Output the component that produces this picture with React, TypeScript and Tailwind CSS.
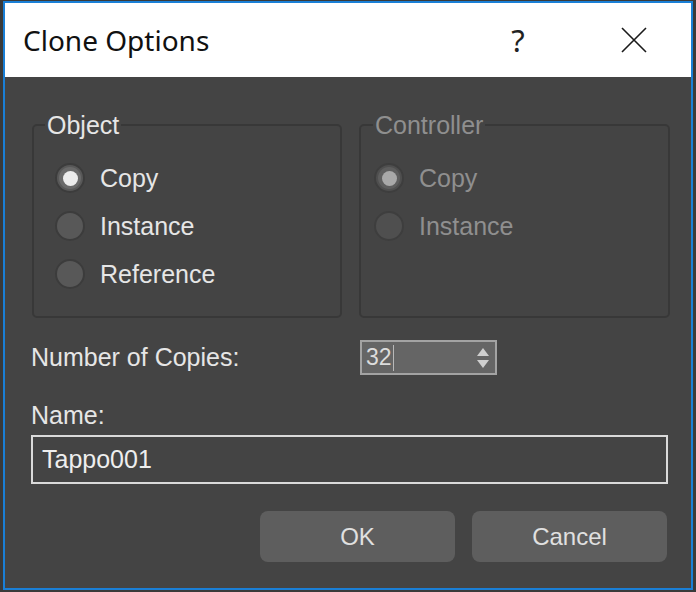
import React from "react";

const body = { fontFamily: '"Liberation Sans", Arial, sans-serif' };

function Radio({ label, checked, disabled }: { label: string; checked?: boolean; disabled?: boolean }) {
  return (
    <div className="flex items-center h-[48px]">
      <div
        className={
          "w-[30px] h-[30px] rounded-full flex items-center justify-center border-2 " +
          (disabled ? "border-[#3e3e3e] bg-[#4f4f4f]" : "border-[#3c3c3c] bg-[#585858]")
        }
      >
        {checked && (
          <div
            className={
              "w-[22px] h-[22px] rounded-full flex items-center justify-center " +
              (disabled ? "bg-[#5e5e5e]" : "bg-[#6a6a6a]")
            }
          >
            <div className={"w-[15px] h-[15px] rounded-full " + (disabled ? "bg-[#a9a9a9]" : "bg-[#ececec]")} />
          </div>
        )}
      </div>
      <span className={"ml-[15px] text-[25px] leading-none " + (disabled ? "text-[#8f8f8f]" : "text-[#e6e6e6]")}>
        {label}
      </span>
    </div>
  );
}

export default function App() {
  return (
    <div className="w-[696px] h-[592px] bg-[#3a3a3a] pl-[3px] pr-[3px] pt-[1px] pb-[2px]" style={body}>
      <div className="w-full h-full border-2 border-[#1a7fd6] flex flex-col bg-[#444444]">
        <div className="h-[74px] bg-white flex items-center pl-[18px] shrink-0">
          <span
            className="text-[28px] text-[#111] flex-1"
            style={{ fontFamily: '"Noto Sans", "Open Sans", sans-serif' }}
          >
            Clone Options
          </span>
          <span
            className="text-[31px] text-[#222] w-[30px] text-center mr-[88px]"
            style={{ fontFamily: '"Noto Sans", sans-serif' }}
          >
            ?
          </span>
          <svg width="26" height="26" viewBox="0 0 26 26" className="mr-[44px]">
            <path d="M1 1 L25 25 M25 1 L1 25" stroke="#1a1a1a" strokeWidth="1.6" fill="none" />
          </svg>
        </div>
        <div className="flex-1 pl-[26px] pr-[20px] pt-[34px] flex flex-col">
          <div className="grid grid-cols-[310px_311px] gap-[17px] ml-[1px]">
            <fieldset className="border-2 border-[#383838] rounded-[5px] h-[207px]">
              <legend className="ml-[11px] px-[2px] text-[25px] text-[#e6e6e6] leading-[28px]">Object</legend>
              <div className="pl-[21px] pt-[15px]">
                <Radio label="Copy" checked />
                <Radio label="Instance" />
                <Radio label="Reference" />
              </div>
            </fieldset>
            <fieldset className="border-2 border-[#383838] rounded-[5px] h-[207px]">
              <legend className="ml-[12px] px-[2px] text-[25px] text-[#8f8f8f] leading-[28px]">Controller</legend>
              <div className="pl-[13px] pt-[15px]">
                <Radio label="Copy" checked disabled />
                <Radio label="Instance" disabled />
              </div>
            </fieldset>
          </div>
          <div className="flex items-center mt-[22px] h-[35px]">
            <span className="text-[25px] text-[#e6e6e6] w-[329px] leading-none">Number of Copies:</span>
            <div className="w-[137px] h-[35px] border-2 border-[#a3a3a3] bg-[#656565] flex items-center pl-[4px] pr-[5px]">
              <span className="text-[23px] text-[#dcdcdc] leading-none">32</span>
              <div className="w-[1px] h-[26px] bg-[#b8b8b8] ml-[1px]" />
              <div className="flex-1" />
              <svg width="14" height="24" viewBox="0 0 14 24">
                <path d="M7 2 L13 10 L1 10 Z" fill="#cfcfcf" />
                <path d="M7 22 L13 14 L1 14 Z" fill="#cfcfcf" />
              </svg>
            </div>
          </div>
          <div className="text-[25px] text-[#e6e6e6] mt-[26px] leading-[28px]">Name:</div>
          <div className="mt-[6px] w-[637px] h-[49px] border-2 border-[#dadada] flex items-center pl-[9px]">
            <span className="text-[25px] text-[#eeeeee]">Tappo001</span>
          </div>
          <div className="flex justify-end gap-[17px] mt-[27px] mr-[4px]">
            <button className="w-[195px] h-[51px] rounded-[8px] bg-[#5e5e5e] text-[24px] text-[#e0e0e0]">OK</button>
            <button className="w-[195px] h-[51px] rounded-[8px] bg-[#5e5e5e] text-[24px] text-[#e0e0e0]">Cancel</button>
          </div>
        </div>
      </div>
    </div>
  );
}
